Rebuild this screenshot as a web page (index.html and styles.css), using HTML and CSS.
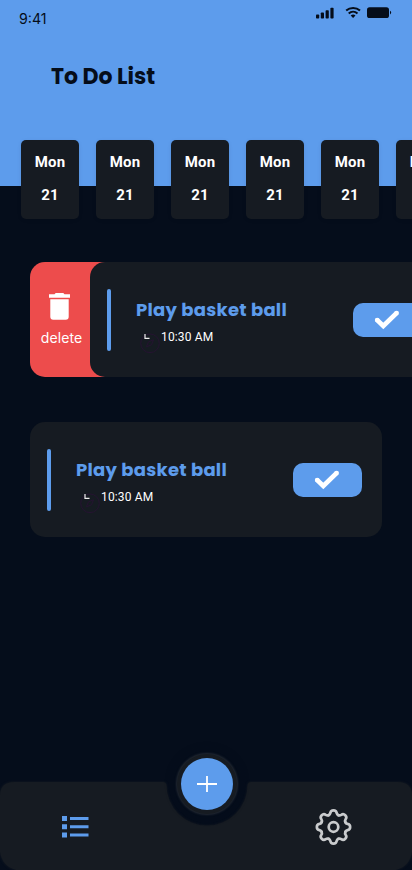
FILE: index.html
```html
<!DOCTYPE html>
<html lang="en">
<head>
<meta charset="utf-8">
<title>To Do List</title>
<link rel="stylesheet" href="styles.css">
</head>
<body>
<svg width="0" height="0" class="defs">
  <defs>
    <path id="tooth" d="M-4.9-11.8C-3.5-12.4-3.3-13.3-3.1-14.1C-2.6-17.5 2.6-17.5 3.1-14.1C3.3-13.3 3.5-12.4 4.9-11.8"/>
    <g id="compass">
      <g fill="none" stroke="#251331"><circle cx="14" cy="15.300" r="9.300"/><path d="M10.500 18.800l2-5 5-2-2 5z"/></g>
      <path d="M9 6v4.300h4.500" fill="none" stroke="#eee" stroke-width="1.200"/>
    </g>
    <path id="check" d="M3 10.900L9.300 17 22.800 3.900" fill="none" stroke="#fff" stroke-width="4.800"/>
    <g id="check-caps" fill="#fff"><circle cx="3.200" cy="11.100" r="2.400"/><circle cx="22.600" cy="4.100" r="2.400"/></g>
  </defs>
</svg>
<div class="phone">
  <header class="top">
    <div class="status">
      <span class="clock">9:41</span>
      <svg class="signals" width="78" height="14" viewBox="0 0 78 14" fill="#050d1a">
        <rect x="0" y="8.500" width="3.200" height="4" rx=".8"/><rect x="4.800" y="6.500" width="3.200" height="6" rx=".8"/><rect x="9.600" y="4.200" width="3.200" height="8.300" rx=".8"/><rect x="14.400" y="1.800" width="3.200" height="10.700" rx=".8"/>
        <g fill="none" stroke="#050d1a" stroke-width="2"><path d="M30.200 4.600a10.200 10.200 0 0 1 13.800 0"/><path d="M32.700 7.400a6.600 6.600 0 0 1 8.800 0"/></g>
        <path d="M34.700 9.600a3.800 3.800 0 0 1 4.800 0L37.100 12z"/>
        <rect x="51" y="1.200" width="22" height="10.800" rx="2.600"/><path d="M74 4.800c1.600.6 1.600 3 0 3.600z"/>
      </svg>
    </div>
    <h1>To Do List</h1>
  </header>
  <div class="days">
    <div class="day"><span>Mon</span><span>21</span></div>
    <div class="day"><span>Mon</span><span>21</span></div>
    <div class="day"><span>Mon</span><span>21</span></div>
    <div class="day"><span>Mon</span><span>21</span></div>
    <div class="day"><span>Mon</span><span>21</span></div>
    <div class="day"><span>Mon</span><span>21</span></div>
  </div>
  <main class="tasks">
    <div class="swipe">
      <div class="delete">
        <svg width="21" height="27" viewBox="0 0 21 27" fill="#fff"><path d="M0 1.300h5.500L6.700 0h7.600l1.200 1.300H21v3.500H0zM1.300 6.200h18.400v17.600a3 3 0 0 1-3 3H4.300a3 3 0 0 1-3-3z"/></svg>
        <span>delete</span>
      </div>
      <article class="task">
        <i class="stripe"></i>
        <div class="info"><h2>Play basket ball</h2><p><svg width="25" height="26"><use href="#compass"/></svg><span>10:30 AM</span></p></div>
        <div class="done"><svg width="27" height="22"><use href="#check"/><use href="#check-caps"/></svg></div>
      </article>
    </div>
    <article class="task">
      <i class="stripe"></i>
      <div class="info"><h2>Play basket ball</h2><p><svg width="25" height="26"><use href="#compass"/></svg><span>10:30 AM</span></p></div>
      <div class="done"><svg width="27" height="22"><use href="#check"/><use href="#check-caps"/></svg></div>
    </article>
  </main>
  <nav class="bar">
    <svg class="bar-shape" width="412" height="88" viewBox="0 0 412 88"><path d="M14 0H163Q166 0 166.500 3A40.500 40.500 0 0 0 247.500 3Q248 0 251 0H398Q412 0 412 14V70Q410 84 396 88H16Q2 84 0 70V14Q0 0 14 0z" fill="#161b22"/></svg>
    <svg class="list" width="27" height="22" viewBox="0 0 27 22" fill="#5d9cec"><path d="M0 0h5v5H0zM0 8.300h5v5H0zM0 16.500h5v5H0zM8 1h18.500v3H8zM8 9.300h18.500v3H8zM8 17.500h18.500v3H8z"/></svg>
    <div class="add"><svg width="20" height="18" viewBox="0 0 20 18"><path d="M0 9h20M10 1v16" stroke="#fff" stroke-width="1.800"/></svg></div>
    <svg class="gear" width="38" height="38" viewBox="-19.500 -19 38 38" fill="none" stroke="#c9cbcd" stroke-width="2.700" stroke-linecap="round">
      <use href="#tooth"/><use href="#tooth" transform="rotate(45)"/><use href="#tooth" transform="rotate(90)"/><use href="#tooth" transform="rotate(135)"/><use href="#tooth" transform="rotate(180)"/><use href="#tooth" transform="rotate(225)"/><use href="#tooth" transform="rotate(270)"/><use href="#tooth" transform="rotate(315)"/>
      <circle r="4.800"/>
    </svg>
  </nav>
</div>
</body>
</html>
```
FILE: styles.css
```css
* { box-sizing: border-box; }
body { margin: 0; font-family: Roboto, sans-serif; background: #050d1b; }
.defs { position: absolute; }
.phone { width: 412px; height: 870px; overflow: hidden; display: flex; flex-direction: column; color: #fff; }
.top { height: 186px; flex: none; background: #5d9cec; color: #050d1a; }
.status { display: flex; justify-content: space-between; align-items: flex-start; padding: 6px 18px 0 19px; height: 61px; }
.clock { font: 14.2px/18px Inter, sans-serif; margin-top: 4px; }
h1, h2, p { margin: 0; }
h1 { font: 700 22px/32px Poppins, Inter, sans-serif; padding-left: 51px; letter-spacing: -0.05px; }
.days { display: flex; gap: 17px; margin: -46px 0 0 21px; flex: none; }
.day { flex: 0 0 58px; height: 79px; border-radius: 5px; background: #161b22; padding-top: 13px; display: flex; flex-direction: column; align-items: center; gap: 15px; font: 700 15px/18px Roboto, sans-serif; letter-spacing: 0.1px; box-shadow: 0 1px 4px rgba(0,0,0,.08); }
.tasks { padding: 43px 30px 0; display: flex; flex-direction: column; gap: 45px; flex: 1; }
.swipe { display: flex; width: 412px; background: linear-gradient(90deg, #ed4c4c 80px, transparent 80px); border-radius: 15px; }
.delete { width: 60px; flex: none; display: flex; flex-direction: column; align-items: center; padding-top: 31px; font: 14px/18px Inter, sans-serif; gap: 9px; padding-left: 3px; letter-spacing: 0.1px; }
.delete svg { margin-right: 5px; }
.task { width: 352px; height: 115px; flex: none; border-radius: 15px; background: #161b22; display: flex; padding: 0 20px 0 17px; align-items: center; }
.stripe { width: 4px; height: 62px; border-radius: 2px; background: #5d9cec; }
.info { margin-left: 25px; flex: 1; height: 115px; padding-top: 33px; }
h2 { font: 700 18px/29px Poppins, Inter, sans-serif; letter-spacing: 0.26px; color: #5d9cec; white-space: nowrap; }
.info p { display: flex; height: 26px; margin-top: 4px; font: 12px/18px Roboto, sans-serif; letter-spacing: 0.15px; }
.done { width: 69px; height: 34px; border-radius: 10px; background: #5d9cec; display: flex; align-items: center; justify-content: center; }
.bar { position: relative; height: 88px; flex: none; display: flex; justify-content: space-between; padding: 26px 60px 0 62px; }
.bar-shape { position: absolute; left: 0; top: 0; filter: drop-shadow(0 0 1px #161b22); }
.list { position: relative; margin-top: 8px; }
.gear { position: relative; }
.add { position: absolute; left: 181px; top: -24px; width: 52px; height: 52px; border-radius: 50%; background: #5d9cec; box-shadow: 0 0 0 4px #161b22, 0 0 2px 5px #222832, 0 0 6px 9px #050d1b; display: flex; align-items: center; justify-content: center; }
```
